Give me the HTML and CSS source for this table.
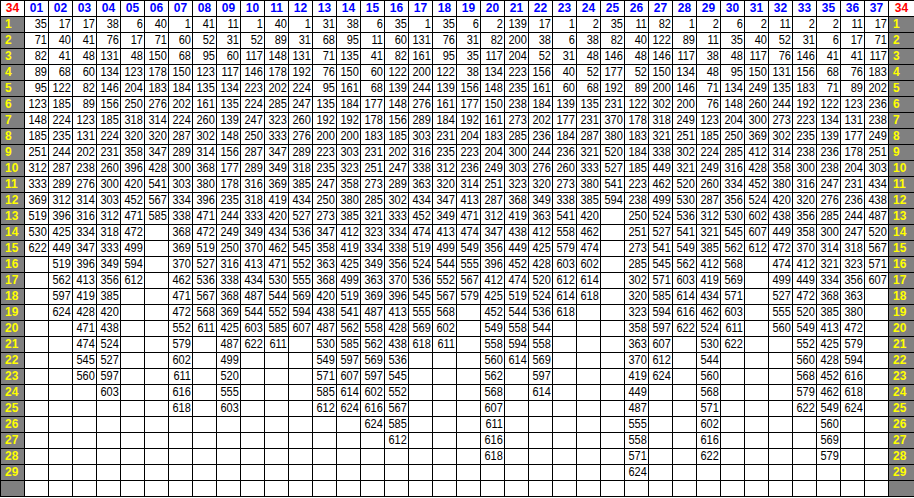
FILE: index.html
```html
<!DOCTYPE html>
<html>
<head>
<meta charset="utf-8">
<title>Table</title>
<link rel="stylesheet" href="styles.css">
</head>
<body>
<table class="grid">
<colgroup>
<col class="c-side">
<col class="c-data" span="36">
<col class="c-side-r">
</colgroup>
<thead>
<tr class="head">
<th class="corner">34</th>
<th>01</th><th>02</th><th>03</th><th>04</th><th>05</th><th>06</th><th>07</th><th>08</th><th>09</th><th>10</th>
<th>11</th><th>12</th><th>13</th><th>14</th><th>15</th><th>16</th><th>17</th><th>18</th><th>19</th><th>20</th>
<th>21</th><th>22</th><th>23</th><th>24</th><th>25</th><th>26</th><th>27</th><th>28</th><th>29</th><th>30</th>
<th>31</th><th>32</th><th>33</th><th>35</th><th>36</th><th>37</th>
<th class="corner">34</th>
</tr>
</thead>
<tbody id="rows"></tbody>
</table>
<script src="script.js"></script>
</body>
</html>
```
FILE: styles.css
```css
body {
  margin: 0;
  background: #fff;
}
.grid {
  border-collapse: collapse;
  table-layout: fixed;
  width: 914px;
  font-family: "Liberation Sans", Arial, sans-serif;
}
.c-side { width: 24px; }
.c-data { width: 24px; }
.c-side-r { width: 26px; }
.grid th,
.grid td {
  border: 1px solid #000;
  height: 15px;
  padding: 0;
  line-height: 15px;
  overflow: hidden;
  white-space: nowrap;
}
.head th {
  background: #fff;
  color: #0000ff;
  font-weight: bold;
  font-size: 12px;
  text-align: center;
}
.head th.corner {
  color: #ff0000;
}
.rownum {
  background: #808080;
  color: #ffff00;
  font-weight: bold;
  font-size: 12px;
  text-align: left;
  padding-left: 4px !important;
}
.cell {
  text-align: right;
  padding-right: 1px !important;
  font-family: "Liberation Sans Narrow", "Liberation Sans", Arial, sans-serif;
  font-size: 12.5px;
  color: #000;
}
.num {
  display: inline-block;
  transform: scaleX(0.88);
  transform-origin: right center;
}
```
FILE: script.js
```js
var cols = [
[35,71,82,89,95,123,148,185,251,312,333,369,519,530,622],
[17,40,41,68,122,185,224,235,244,287,289,312,396,425,449,519,562,597,624],
[17,41,48,60,82,89,123,131,202,238,276,314,316,334,347,396,413,419,428,471,474,545,560],
[38,76,131,134,146,156,185,224,231,260,300,303,312,318,333,349,356,385,420,438,524,527,597,603],
[6,17,48,123,204,250,318,320,358,396,420,452,471,472,499,594,612],
[40,71,150,178,183,276,314,320,347,428,541,567,585],
[1,60,68,150,184,202,224,287,289,300,303,334,338,368,369,370,462,471,472,552,579,602,611,616,618],
[41,52,95,123,135,161,260,302,314,368,380,396,471,472,519,527,536,567,568,611],
[11,31,60,117,134,135,139,148,156,177,178,235,244,249,250,316,338,368,369,425,487,499,520,555,603],
[1,52,117,146,223,224,247,250,287,289,316,318,333,349,370,413,434,487,544,603,622],
[40,89,148,178,202,285,323,333,347,349,369,419,420,434,462,471,530,544,552,585,611],
[1,31,131,192,224,247,260,276,289,318,385,434,527,536,545,552,555,569,594,607],
[31,68,71,76,95,135,192,200,223,235,247,250,273,347,358,363,368,420,438,487,530,549,571,585,612],
[38,95,135,150,161,184,192,200,303,323,358,380,385,412,419,425,499,519,541,562,585,597,607,614,624],
[6,11,41,60,68,177,178,183,231,251,273,285,321,323,334,349,363,369,487,558,562,569,597,602,616,624],
[35,60,82,122,139,148,156,185,202,247,289,302,333,334,338,356,370,396,413,428,438,536,545,552,567,585,612],
[1,131,161,200,244,276,289,303,316,338,363,434,452,474,519,524,536,545,555,569,618],
[35,76,95,122,139,161,184,231,235,312,320,347,349,413,499,544,552,567,568,602,611],
[6,31,35,38,156,177,192,204,223,236,314,413,471,474,549,555,567,579],
[2,82,117,134,148,150,161,183,204,249,251,287,312,347,356,396,412,425,452,549,558,560,562,568,607,611,616,618],
[139,200,204,223,235,238,273,285,300,303,323,368,419,438,449,452,474,519,544,558,594,614],
[17,38,52,156,161,184,202,236,244,276,320,349,363,412,425,428,520,524,536,544,558,569,597,614],
[1,6,31,40,60,139,177,184,236,260,273,338,541,558,579,603,612,614,618],
[2,38,48,52,68,135,231,287,321,333,380,385,420,462,474,602,614,618],
[35,82,146,177,192,231,370,380,520,527,541,594],
[11,40,48,52,89,122,178,183,184,185,223,238,250,251,273,285,302,320,323,358,363,370,419,449,487,555,558,571,624],
[82,122,146,150,200,302,318,321,338,449,462,499,524,527,541,545,571,585,594,597,607,612,624],
[1,89,117,134,146,200,249,251,302,321,520,530,536,541,549,562,603,614,616,622],
[2,11,38,48,71,76,123,185,224,249,260,287,312,321,385,412,419,434,462,524,530,544,560,568,571,602,616,622],
[6,35,48,95,134,148,204,250,285,316,334,356,530,545,562,568,569,571,603,611,622],
[2,40,117,150,249,260,300,369,412,428,452,524,602,607,612],
[11,52,76,131,135,244,273,302,314,358,380,420,438,449,472,474,499,527,555,560],
[2,31,146,156,183,192,223,235,238,300,316,320,356,358,370,412,449,472,520,549,552,560,568,579,622],
[2,6,41,68,71,122,134,139,236,238,247,276,285,300,314,321,334,368,385,413,425,428,452,462,549,560,569,579],
[11,17,41,76,89,123,131,177,178,204,231,236,244,247,318,323,356,363,380,472,579,594,616,618,624],
[17,71,117,183,202,236,238,249,251,303,434,438,487,520,567,571,607]
];
var tbody = document.getElementById('rows');
for (var r = 0; r < 30; r++) {
  var tr = document.createElement('tr');
  var label = r < 29 ? String(r + 1) : '';
  var left = document.createElement('th');
  left.className = 'rownum';
  left.textContent = label;
  tr.appendChild(left);
  for (var c = 0; c < cols.length; c++) {
    var td = document.createElement('td');
    td.className = 'cell';
    var v = cols[c][r];
    if (v !== undefined) {
      var s = document.createElement('span');
      s.className = 'num';
      s.textContent = String(v);
      td.appendChild(s);
    }
    tr.appendChild(td);
  }
  var right = document.createElement('th');
  right.className = 'rownum';
  right.textContent = label;
  tr.appendChild(right);
  tbody.appendChild(tr);
}
```
